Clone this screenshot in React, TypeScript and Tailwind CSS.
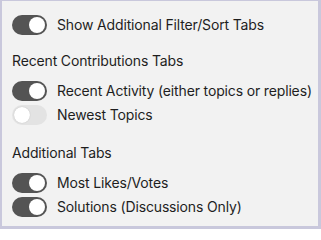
import React from "react";

function Toggle({ on }: { on: boolean }) {
  return (
    <span
      className={`relative inline-block h-[20px] w-[35px] shrink-0 rounded-full ${
        on ? "bg-[#545454]" : "bg-[#e3e3e3]"
      }`}
    >
      <span
        className={`absolute top-[2px] h-[16px] w-[16px] rounded-full bg-white ${
          on ? "right-[2px]" : "left-[2px] shadow-[0_0_1px_rgba(0,0,0,0.25)]"
        }`}
      />
    </span>
  );
}

function Row({ on, label }: { on: boolean; label: string }) {
  return (
    <div className="flex h-6 items-center gap-[10px]">
      <Toggle on={on} />
      <span className="whitespace-nowrap text-[14px] leading-5 tracking-[-0.15px] text-[#1e1e1e]">{label}</span>
    </div>
  );
}

export default function App() {
  return (
    <div
      className="h-[229px] w-[321px] border-t border-r-[3px] border-b-[3px] border-l-2 border-[#c9c8dc] bg-[#f2f2f2] pt-[12px] pl-[10px]"
      style={{ fontFamily: "Inter, 'Liberation Sans', sans-serif" }}
    >
      <Row on label="Show Additional Filter/Sort Tabs" />

      <p className="mt-[14px] whitespace-nowrap text-[14px] leading-5 tracking-[-0.15px] text-[#1e1e1e]">
        Recent Contributions Tabs
      </p>
      <div className="mt-2">
        <Row on label="Recent Activity (either topics or replies)" />
        <Row on={false} label="Newest Topics" />
      </div>

      <p className="mt-[16px] whitespace-nowrap text-[14px] leading-5 tracking-[-0.15px] text-[#1e1e1e]">
        Additional Tabs
      </p>
      <div className="mt-2">
        <Row on label="Most Likes/Votes" />
        <Row on label="Solutions (Discussions Only)" />
      </div>
    </div>
  );
}
